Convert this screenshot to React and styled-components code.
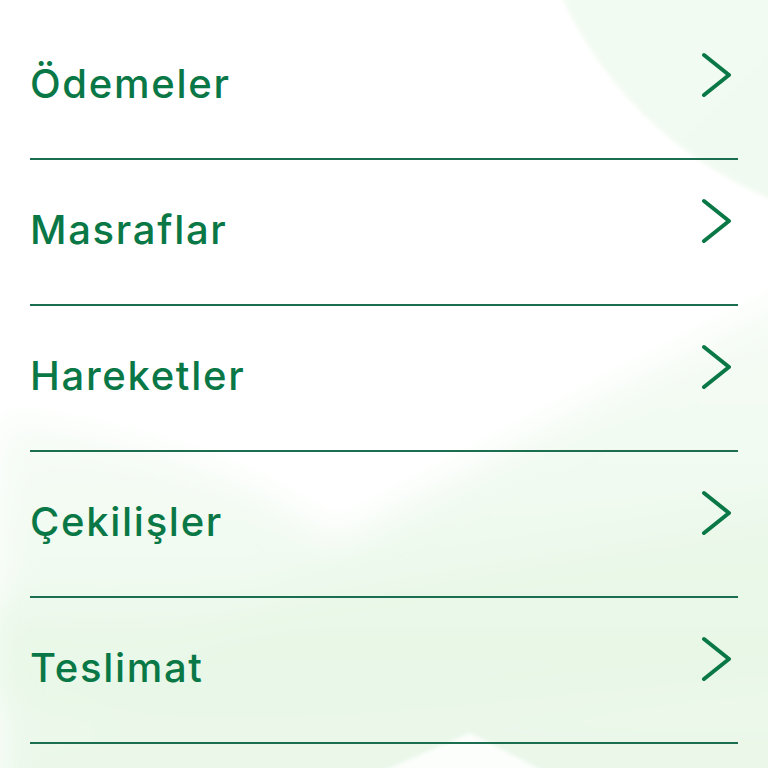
import React from "react";
import styled, { createGlobalStyle } from "styled-components";

const GlobalStyle = createGlobalStyle`
  html, body {
    margin: 0;
    padding: 0;
    background: #ffffff;
  }
  * {
    box-sizing: border-box;
  }
`;

const items = ["Ödemeler", "Masraflar", "Hareketler", "Çekilişler", "Teslimat"];

const Page = styled.main`
  position: relative;
  width: 768px;
  height: 768px;
  overflow: hidden;
  background: #ffffff;
  font-family: "Inter", "Noto Sans", sans-serif;
`;

const Backdrop = styled.svg`
  position: absolute;
  inset: 0;
  width: 100%;
  height: 100%;
  z-index: 0;
`;

const List = styled.ul`
  position: relative;
  z-index: 1;
  list-style: none;
  margin: 0;
  padding: 14px 30px 0 30px;
`;

const Row = styled.li`
  display: flex;
  align-items: center;
  justify-content: space-between;
  height: 146px;
  padding: 0 7px 6px 0;
  border-bottom: 2px solid #1b6e4f;
  cursor: pointer;
`;

const Label = styled.span`
  font-size: 40px;
  font-weight: 500;
  color: #0a7846;
  letter-spacing: 1.7px;
`;

const Chevron = styled.svg`
  width: 31px;
  height: 46px;
  margin-bottom: 16px;
  flex-shrink: 0;
`;

const ChevronIcon = () => (
  <Chevron viewBox="0 0 31 46">
    <polyline
      points="4,3 29,23 4,43"
      fill="none"
      stroke="#0a7846"
      strokeWidth="4"
      strokeLinecap="round"
      strokeLinejoin="round"
    />
  </Chevron>
);

const Waves = () => (
  <Backdrop viewBox="0 0 768 768" preserveAspectRatio="none">
    <defs>
      <filter id="soft" x="-30%" y="-30%" width="160%" height="160%">
        <feGaussianBlur stdDeviation="18" />
      </filter>
      <filter id="edge" x="-10%" y="-10%" width="120%" height="120%">
        <feGaussianBlur stdDeviation="2" />
      </filter>
      <linearGradient id="g1" x1="0" y1="0" x2="1" y2="1">
        <stop offset="0" stopColor="#f5fcf5" />
        <stop offset="1" stopColor="#eef9ee" />
      </linearGradient>
      <linearGradient id="g2" x1="0" y1="0" x2="0" y2="1">
        <stop offset="0" stopColor="#f6fcf6" />
        <stop offset="1" stopColor="#e8f7e7" />
      </linearGradient>
    </defs>
    <circle cx="925" cy="-170" r="400" fill="url(#g1)" filter="url(#edge)" />
    <g filter="url(#soft)">
      <path d="M0 420 C 150 440 260 480 340 545 L 0 820 Z" fill="url(#g2)" />
      <path d="M340 540 L 820 280 L 820 820 L -20 820 Z" fill="url(#g2)" />
      <path d="M-20 600 C 200 640 420 560 820 500 L 820 680 C 560 690 300 740 -20 700 Z" fill="#e6f6e5" opacity="0.6" />
    </g>
    <path d="M340 790 L 470 733 L 580 790 Z" fill="#ffffff" filter="url(#edge)" opacity="0.9" />
  </Backdrop>
);

export default function App() {
  return (
    <>
      <GlobalStyle />
      <Page>
        <Waves />
        <List>
          {items.map((item) => (
            <Row key={item}>
              <Label>{item}</Label>
              <ChevronIcon />
            </Row>
          ))}
        </List>
      </Page>
    </>
  );
}
